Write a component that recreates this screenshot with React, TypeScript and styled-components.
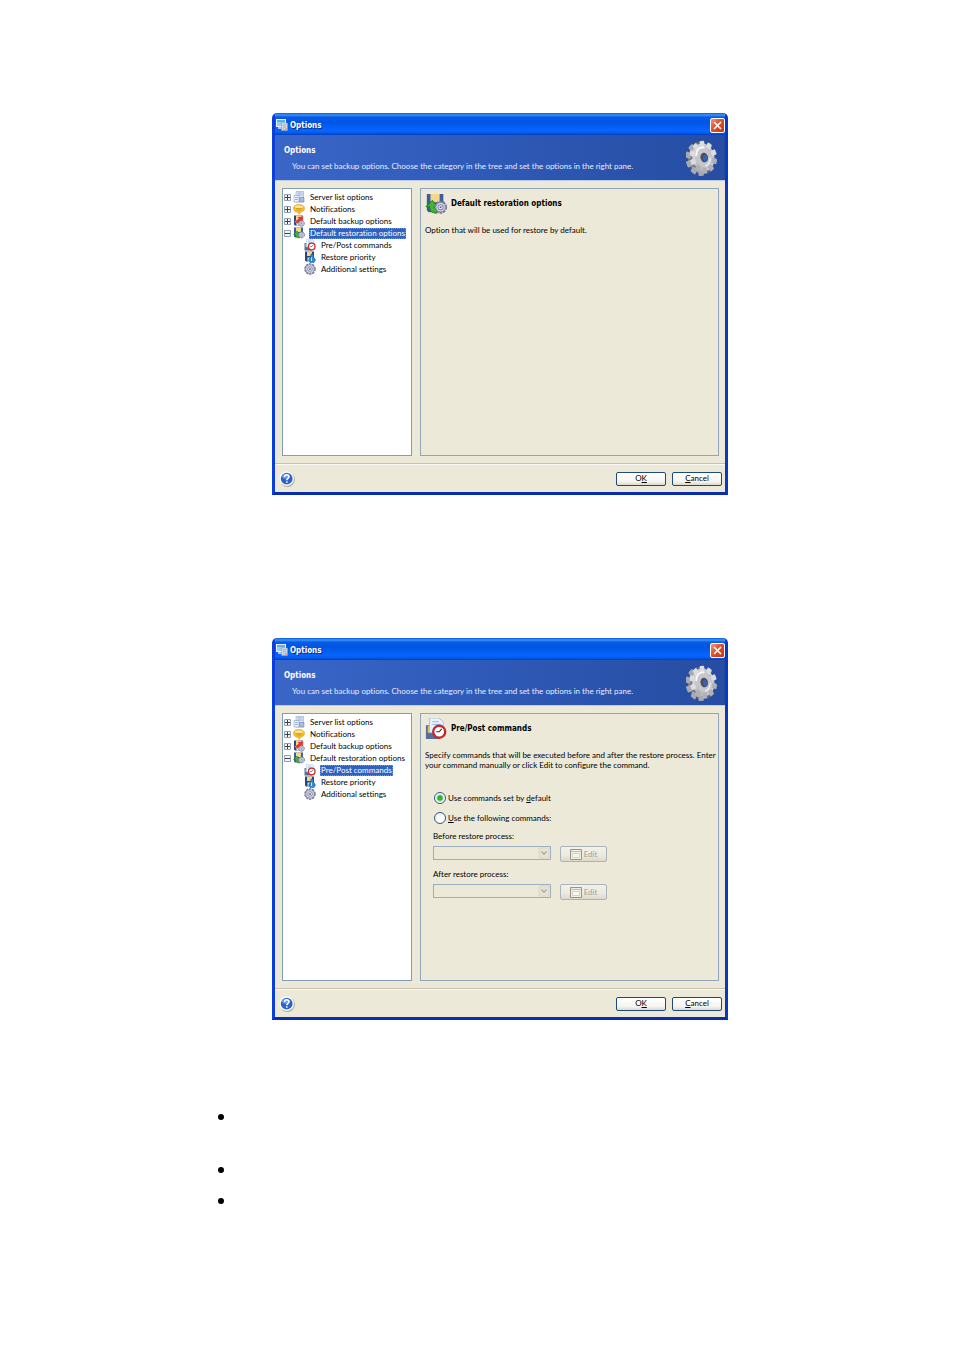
import React, { useId, useState } from "react";
import styled, { createGlobalStyle, css } from "styled-components";

const face = {
  ui: 'Lato, Tahoma, "Liberation Sans", sans-serif',
  strong: '"DejaVu Sans Condensed", Tahoma, sans-serif',
};

const GlobalStyle = createGlobalStyle`
  *, *::before, *::after { box-sizing: border-box; }
  body { margin: 0; background: #fff; color: #000; font: 8px/10px ${face.ui}; font-variant-ligatures: none; }
`;

const Page = styled.main`
  padding: 113px 226px 100px 218px;
`;

const Figures = styled.div`
  display: flex;
  flex-direction: column;
  gap: 143px;
  margin-left: 54px;
`;

const Dialog = styled.section`
  display: flex;
  flex-direction: column;
  border: solid #0a3fdc;
  border-width: 0 3px 3px;
  border-color: #0a3fdc #0a38c4 #0a2cb0 #0a3fdc;
  border-radius: 5px 5px 0 0;
  background: #ece9d8;
  overflow: hidden;
`;

const TitleBar = styled.header`
  display: flex;
  align-items: center;
  gap: 2px;
  height: 22px;
  margin: 0 -3px;
  padding: 2px 3px 0 4px;
  background: linear-gradient(#0a58dc 0, #3c94fb 2px, #0a5ce6 4px, #0054e3 9px, #0560f8 15px, #0666ff 18px, #0450d8 21px, #0038b8 22px);
`;

const WindowTitle = styled.h2`
  flex: 1;
  margin: 0;
  padding-top: 1px;
  color: #fff;
  font: bold 8px/12px ${face.strong};
  text-shadow: 1px 1px 0 #0a2f8c;
`;

const CloseButton = styled.button`
  display: grid;
  place-items: center;
  width: 15px;
  height: 15px;
  padding: 0;
  border: 1px solid #fff;
  border-radius: 2px;
  background: linear-gradient(135deg, #f09a80, #dd4f2c 45%, #c23a14);
`;

const Banner = styled.div`
  display: flex;
  align-items: center;
  justify-content: space-between;
  height: 45px;
  padding: 0 7px 0 9px;
  background: linear-gradient(90deg, #3a66c8, #2f5ab8 45%, #264da2);
  color: #e6edfb;
`;

const BannerTitle = styled.h3`
  margin: 2px 0 5px;
  color: #fff;
  font: bold 8px/10px ${face.strong};
`;

const BannerText = styled.p`
  margin: 0 0 0 8px;
`;

const Body = styled.div`
  display: grid;
  grid-template-columns: 130px 1fr;
  gap: 8px;
  min-height: 284px;
  padding: 7px 6px 7px 7px;
  border-top: 1px solid #bccbe6;
  border-bottom: 1px solid #c5c2b4;
`;

const Tree = styled.ul`
  margin: 0;
  padding: 2px 0 0 1px;
  border: 1px solid #7f9db9;
  background: #fff;
  list-style: none;
`;

const Branch = styled.ul`
  margin: 0;
  padding: 0 0 0 20px;
  list-style: none;
`;

const TreeRow = styled.div`
  display: flex;
  align-items: center;
  gap: 2px;
  height: 12px;
`;

const TreeLabel = styled.span<{ $selected: boolean }>`
  margin-left: 2px;
  padding: 0 1px;
  line-height: 11px;
  white-space: nowrap;
  ${(p) => p.$selected && css`
    background: #2f62c0;
    color: #fff;
    outline: 1px dotted #a58f78;
    outline-offset: -1px;
  `}
`;

const Expander = styled.button`
  flex: none;
  display: grid;
  width: 7px;
  height: 7px;
  padding: 0;
  border: 0;
  background: none;
`;

const Pane = styled.div`
  padding: 4px 0 0 4px;
  border: 1px solid #8fa6bb;
`;

const PaneHead = styled.div`
  display: flex;
  align-items: center;
  gap: 4px;
  height: 22px;
`;

const PaneTitle = styled.h3`
  margin: 0;
  font: bold 8px/10px ${face.strong};
`;

const PaneText = styled.p`
  margin: 10px 0 0;
`;

const Choices = styled.fieldset`
  display: flex;
  flex-direction: column;
  gap: 8px;
  margin: 22px 0 0;
  padding: 0 0 0 9px;
  border: 0;
`;

const Choice = styled.label`
  display: flex;
  align-items: center;
  gap: 2px;
  height: 12px;
`;

const Radio = styled.input`
  appearance: none;
  width: 12px;
  height: 12px;
  margin: 0;
  border: 1px solid #2f5d86;
  border-radius: 50%;
  background: radial-gradient(circle at 60% 60%, #fff 40%, #dcdcd2);
  &:checked {
    background: radial-gradient(circle, #3fc43a 0, #2aa828 2px, #fff 4px, #e4e4da 6px);
  }
`;

const Commands = styled.div`
  display: flex;
  flex-direction: column;
  gap: 7px;
  padding: 7px 0 0 8px;
`;

const CommandLabel = styled.label`
  display: block;
`;

const CommandRow = styled.div`
  display: flex;
  align-items: center;
  gap: 9px;
  padding-top: 5px;
`;

const SelectBox = styled.div`
  display: grid;
  width: 118px;
  height: 14px;
  margin-bottom: 2px;
  border: 1px solid #9aafc0;
  > * { grid-area: 1 / 1; }
  > svg { justify-self: end; pointer-events: none; }
`;

const Select = styled.select`
  appearance: none;
  width: 100%;
  border: 0;
  background: none;
  font: inherit;
`;

const EditButton = styled.button`
  display: flex;
  align-items: center;
  justify-content: center;
  gap: 2px;
  width: 47px;
  height: 16px;
  padding: 0;
  border: 1px solid #a9b5bd;
  border-radius: 2px;
  background: linear-gradient(#f3f1e8, #eceadd 60%, #dcd9cb);
  color: #a29f90;
  font: inherit;
`;

const Footer = styled.footer`
  display: flex;
  align-items: center;
  gap: 6px;
  height: 28px;
  padding: 0 3px 0 4px;
  border-top: 1px solid #fbfaf4;
`;

const HelpButton = styled.button`
  display: grid;
  margin: 0 auto 0 0;
  padding: 0;
  border: 0;
  background: none;
`;

const PushButton = styled.button`
  width: 50px;
  height: 14px;
  padding: 0;
  border: 1px solid #1d4a78;
  border-radius: 2px;
  background: linear-gradient(#fff, #f6f5f0 70%, #dcd8cc);
  color: #000;
  font: 8px/11px ${face.ui};
`;

const Bullets = styled.ul`
  margin: 94px 0 0;
  padding: 0;
  list-style: none;
`;

const Bullet = styled.li<{ $lines?: number }>`
  min-height: ${(p) => (p.$lines === 2 ? 53 : 31)}px;
  &::before {
    content: "";
    display: block;
    width: 6px;
    height: 6px;
    border-radius: 50%;
    background: #000;
  }
`;

const GEAR_TEETH = [0, 36, 72, 108, 144, 180, 216, 252, 288, 324];

function Gear() {
  const id = useId();
  return (
    <svg width="32" height="36" viewBox="0 0 32 36" aria-hidden="true">
      <defs>
        <linearGradient id={id} x1="0" y1="0" x2="1" y2="1">
          <stop offset="0" stopColor="#e2e2e5" />
          <stop offset=".5" stopColor="#b9babf" />
          <stop offset="1" stopColor="#d6d7db" />
        </linearGradient>
      </defs>
      <g transform="rotate(-12 16 18)">
        <g fill="#777981">
          <ellipse cx="13" cy="18.500" rx="11" ry="14" />
          {GEAR_TEETH.map((a) => (
            <rect key={a} x="-3.200" y="-17" width="6.400" height="6" rx="1" fill={a > 170 && a < 330 ? "#a9aab0" : "#66686f"} transform={`translate(13.500 18.500) scale(.82 1) rotate(${a + 8})`} />
          ))}
        </g>
        <ellipse cx="17.500" cy="17.500" rx="11" ry="14" fill={`url(#${id})`} />
        {GEAR_TEETH.map((a) => (
          <rect key={a} x="-2.800" y="-16.500" width="5.600" height="6" rx="1.200" fill={a > 90 && a < 220 ? "#b0b1b7" : "#dcdce0"} transform={`translate(17.500 17.500) scale(.82 1) rotate(${a + 8})`} />
        ))}
        <ellipse cx="17.800" cy="17.500" rx="7.500" ry="9.800" fill="#c6c7cc" />
        <path d="M11 14c1-5 5-7.500 9-6" fill="none" stroke="#f8f8fa" strokeWidth="2" strokeLinecap="round" />
        <path d="M24 20c-1 4-3 6-6 6.500" fill="none" stroke="#ededf0" strokeWidth="1.500" strokeLinecap="round" />
        <ellipse cx="18.300" cy="18" rx="3.800" ry="4.800" fill="#4c4f5a" />
        <ellipse cx="19.200" cy="18.800" rx="2.300" ry="3.200" fill="#3a60b2" />
      </g>
    </svg>
  );
}

function AppIcon() {
  return (
    <svg width="12" height="12" viewBox="0 0 12 12" aria-hidden="true">
      <rect x=".5" y=".5" width="9" height="7" fill="#8ed3f4" stroke="#e8f4ff" />
      <path d="M1 2h8" stroke="#3b86c8" />
      <path d="M2 8h4v2H2z" fill="#bcc7d6" />
      <rect x="5.500" y="4" width="6" height="7.500" fill="#e9e9ef" stroke="#8b93a8" strokeWidth=".6" />
      <path d="M6.500 6h4M6.500 8h4M6.500 10h2" stroke="#7b88a4" strokeWidth=".8" />
      <circle cx="10" cy="10" r=".8" fill="#d8552c" />
    </svg>
  );
}

function Cog({ cx, cy, r }: { cx: number; cy: number; r: number }) {
  return (
    <g>
      <circle cx={cx} cy={cy} r={r * 0.86} fill="none" stroke="#70748f" strokeWidth={r * 0.28} strokeDasharray={`${r * 0.4} ${r * 0.14}`} />
      <circle cx={cx} cy={cy} r={r * 0.74} fill="#d3d6e8" stroke="#8b90b0" strokeWidth={r * 0.14} />
      <circle cx={cx} cy={cy} r={r * 0.4} fill="#f4f5fb" stroke="#7f85a8" strokeWidth={r * 0.16} />
      <circle cx={cx} cy={cy} r={r * 0.16} fill="#5f6588" />
    </g>
  );
}

function Clock({ cx, cy, r }: { cx: number; cy: number; r: number }) {
  return (
    <g>
      <circle cx={cx} cy={cy} r={r * 0.82} fill="#fff" stroke="#c22a2e" strokeWidth={r * 0.32} />
      <path d={`M${cx + r * 0.35} ${cy - r * 0.4}L${cx} ${cy}H${cx - r * 0.4}`} fill="none" stroke="#43262a" strokeWidth={r * 0.15} />
    </g>
  );
}

function Disk({ dark }: { dark?: boolean }) {
  return (
    <g>
      <path d="M2 1h18v20H4l-2-2z" fill={dark ? "#2c467c" : "#3c5f9c"} />
      <path d="M6 1h10v9H6z" fill="#f3d58c" />
      <path d="M7 13h8v8H7z" fill="#dfe7f2" />
    </g>
  );
}

type IconName = "server" | "notify" | "backup" | "restore" | "prepost" | "priority" | "settings";

function Glyph({ name, size }: { name: IconName; size: number }) {
  return (
    <svg width={size} height={size} viewBox="0 0 24 24" aria-hidden="true">
      {name === "server" && (
        <>
          <path d="M6 1h15v21H6z" fill="#dde7f7" stroke="#7f97c6" />
          <path d="M9 4h10M9 8h10" stroke="#8ba3d3" strokeWidth="1.500" />
          <path d="M2 9h10v13H2z" fill="#f2f5fb" stroke="#6f86b4" />
          <path d="M4 13h6M4 17h6" stroke="#7e94c2" strokeWidth="1.500" />
          <path d="M13 13h9v9h-9z" fill="#a9bce0" stroke="#6077aa" />
        </>
      )}
      {name === "notify" && (
        <>
          <path d="M12 3c6 0 11 2.500 11 8 0 4-4 7-8 7.500L12 23l-1-4C5 18.500 1 16 1 11c0-5.500 5-8 11-8z" fill="#f6bd27" stroke="#d48b12" />
          <ellipse cx="12" cy="7.500" rx="8" ry="3" fill="#fde48f" />
          <path d="M6 11h12M7 14h10" stroke="#c88d1c" strokeWidth="1.200" />
        </>
      )}
      {name === "backup" && (
        <>
          <Disk dark />
          <path d="M21 2 8 4l3 3-7 6 5 5 7-7 4 3z" fill="#e3372c" stroke="#fff" strokeWidth=".8" />
          <Cog cx={17} cy={17} r={6.500} />
        </>
      )}
      {name === "restore" && (
        <>
          <Disk />
          <path d="M8 8 1 15h4c0 4 2 7 8 7v-5c-2 0-3-1-3-2h4z" fill="#41b52f" stroke="#187a1c" />
          <Cog cx={17} cy={15.500} r={7} />
        </>
      )}
      {name === "prepost" && (
        <>
          <path d="M1 8h15v15H1z" fill="#52709f" />
          <path d="M3 9h5v7H3z" fill="#eebd62" />
          <path d="M5 0h10l5 4v12H5z" fill="#eaf3fd" stroke="#a0bfe4" />
          <path d="M8 4h7M8 7h9" stroke="#8ab3e6" />
          <Clock cx={15.500} cy={15} r={8} />
        </>
      )}
      {name === "priority" && (
        <>
          <Disk dark />
          <path d="M14 6h4l1 6 4 6-3 5h-8l-3-5 4-6z" fill="#2a8cdb" stroke="#135594" />
          <path d="M15 13v7" stroke="#bfe4ff" strokeWidth="2" />
        </>
      )}
      {name === "settings" && <Cog cx={12} cy={12} r={11.500} />}
    </svg>
  );
}

function ExpanderBox({ open, label }: { open: boolean; label: string }) {
  return (
    <Expander type="button" aria-expanded={open} aria-label={label}>
      <svg width="7" height="7" viewBox="0 0 7 7" aria-hidden="true">
        <path d="M.5.5h6v6h-6z" fill="#f4f3ee" stroke="#8fa0b8" />
        <path d={open ? "M1 3.500h5" : "M1 3.500h5M3.500 1v5"} stroke="#39424f" />
      </svg>
    </Expander>
  );
}

const roots: { name: string; icon: IconName }[] = [
  { name: "Server list options", icon: "server" },
  { name: "Notifications", icon: "notify" },
  { name: "Default backup options", icon: "backup" },
  { name: "Default restoration options", icon: "restore" },
];

const children: { name: string; icon: IconName }[] = [
  { name: "Pre/Post commands", icon: "prepost" },
  { name: "Restore priority", icon: "priority" },
  { name: "Additional settings", icon: "settings" },
];

function CategoryTree({ selected }: { selected: string }) {
  return (
    <Tree>
      {roots.map((item) => {
        const open = item.icon === "restore";
        return (
          <li key={item.name}>
            <TreeRow>
              <ExpanderBox open={open} label={item.name} />
              <Glyph name={item.icon} size={12} />
              <TreeLabel $selected={item.name === selected}>{item.name}</TreeLabel>
            </TreeRow>
            {open && (
              <Branch>
                {children.map((child) => (
                  <li key={child.name}>
                    <TreeRow>
                      <Glyph name={child.icon} size={12} />
                      <TreeLabel $selected={child.name === selected}>{child.name}</TreeLabel>
                    </TreeRow>
                  </li>
                ))}
              </Branch>
            )}
          </li>
        );
      })}
    </Tree>
  );
}

function OptionsDialog({ selected, icon, children: content }: { selected: string; icon: IconName; children: React.ReactNode }) {
  return (
    <Dialog>
      <TitleBar>
        <AppIcon />
        <WindowTitle>Options</WindowTitle>
        <CloseButton type="button" aria-label="Close">
          <svg width="9" height="9" viewBox="0 0 9 9" aria-hidden="true">
            <path d="M1 1l7 7M8 1 1 8" stroke="#fff" strokeWidth="1.600" />
          </svg>
        </CloseButton>
      </TitleBar>
      <Banner>
        <div>
          <BannerTitle>Options</BannerTitle>
          <BannerText>
            You can set backup options. Choose the category in the tree and set the options in the right pane.
          </BannerText>
        </div>
        <Gear />
      </Banner>
      <Body>
        <CategoryTree selected={selected} />
        <Pane>
          <PaneHead>
            <Glyph name={icon} size={22} />
            <PaneTitle>{selected}</PaneTitle>
          </PaneHead>
          {content}
        </Pane>
      </Body>
      <Footer>
        <HelpButton type="button" aria-label="Help">
          <svg width="16" height="16" viewBox="0 0 16 16" aria-hidden="true">
            <circle cx="8.400" cy="8.500" r="7.400" fill="#a9a9a6" />
            <circle cx="7.700" cy="7.700" r="7.200" fill="#fff" />
            <circle cx="7.700" cy="7.700" r="5.900" fill="#2f62c8" />
            <ellipse cx="7" cy="5.200" rx="4" ry="2.500" fill="#6f9be8" />
            <path d="M5.600 6c0-3 4.500-2.800 4.400-.2C10 7.400 7.800 7.300 7.800 9.300M7.800 10.300v1.500" fill="none" stroke="#fff" strokeWidth="1.500" />
          </svg>
        </HelpButton>
        <PushButton type="button">O<u>K</u></PushButton>
        <PushButton type="button"><u>C</u>ancel</PushButton>
      </Footer>
    </Dialog>
  );
}

function CommandField({ id, label }: { id: string; label: string }) {
  return (
    <div>
      <CommandLabel htmlFor={id}>{label}</CommandLabel>
      <CommandRow>
        <SelectBox>
          <Select id={id} disabled />
          <svg width="12" height="12" viewBox="0 0 12 12" aria-hidden="true">
            <path d="M1 1h10v10H1z" fill="#e6e3d6" stroke="#d9d6c8" />
            <path d="M3.500 4.500 6 7l2.500-2.500" fill="none" stroke="#b3b0a2" strokeWidth="1.600" />
          </svg>
        </SelectBox>
        <EditButton type="button" disabled>
          <svg width="12" height="11" viewBox="0 0 12 11" aria-hidden="true">
            <path d="M.5.5h11v10H.5z" fill="#efede2" stroke="#98958a" />
            <path d="M1 2.500h10" stroke="#c5c2b5" />
            <path d="M2.500 4.500h7v4h-7z" fill="#f8f7f0" stroke="#d6d3c6" />
          </svg>
          Edit
        </EditButton>
      </CommandRow>
    </div>
  );
}

function CommandSettings() {
  const [source, setSource] = useState("default");
  return (
    <>
      <PaneText>
        Specify commands that will be executed before and after the restore process. Enter your command manually or
        click Edit to configure the command.
      </PaneText>
      <Choices aria-label="Commands">
        <Choice>
          <Radio type="radio" name="source" checked={source === "default"} onChange={() => setSource("default")} />
          <span>Use commands set by <u>d</u>efault</span>
        </Choice>
        <Choice>
          <Radio type="radio" name="source" checked={source === "custom"} onChange={() => setSource("custom")} />
          <span><u>U</u>se the following commands:</span>
        </Choice>
      </Choices>
      <Commands>
        <CommandField id="before" label="Before restore process:" />
        <CommandField id="after" label="After restore process:" />
      </Commands>
    </>
  );
}

export default function App() {
  return (
    <Page>
      <GlobalStyle />
      <Figures>
        <OptionsDialog selected="Default restoration options" icon="restore">
          <PaneText>Option that will be used for restore by default.</PaneText>
        </OptionsDialog>
        <OptionsDialog selected="Pre/Post commands" icon="prepost">
          <CommandSettings />
        </OptionsDialog>
      </Figures>
      <Bullets>
        <Bullet $lines={2} />
        <Bullet />
        <Bullet />
      </Bullets>
    </Page>
  );
}
